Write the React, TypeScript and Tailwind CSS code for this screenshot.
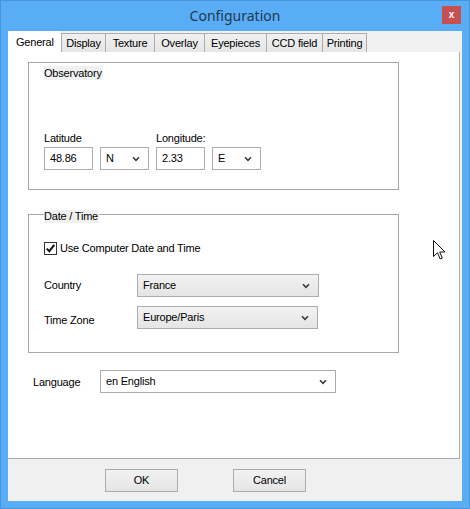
import React from 'react'

function Chevron() {
  return (
    <svg width="8" height="6" viewBox="0 0 8 6" className="shrink-0">
      <path d="M1 1.2 L4 4.4 L7 1.2" fill="none" stroke="#3a3a3a" strokeWidth="1.6" />
    </svg>
  )
}

function Select({
  value,
  className,
  flat,
}: {
  value: string
  className: string
  flat?: boolean
}) {
  return (
    <div
      className={`flex items-center justify-between border pl-[5px] pr-[8px] ${
        flat
          ? 'border-[#acacac] bg-white'
          : 'border-[#acacac] bg-gradient-to-b from-[#f2f2f2] to-[#e5e5e5]'
      } ${className}`}
    >
      <span>{value}</span>
      <Chevron />
    </div>
  )
}

function TextInput({ value }: { value: string }) {
  return (
    <div className="flex h-[23px] w-[49px] items-center border border-[#acacac] bg-white pl-[5px]">
      {value}
    </div>
  )
}

const tabs = [
  { label: 'Display', w: 'w-[45px]' },
  { label: 'Texture', w: 'w-[49px]' },
  { label: 'Overlay', w: 'w-[50px]' },
  { label: 'Eyepieces', w: 'w-[62px]' },
  { label: 'CCD field', w: 'w-[56px]' },
  { label: 'Printing', w: 'w-[44px]' },
]

export default function App() {
  return (
    <div className="relative flex h-[509px] w-[470px] flex-col border border-[#4796dc] bg-[#59adf6] font-['Liberation_Sans',Arial,sans-serif] text-[11px] tracking-[-0.2px] text-black">
      {/* Title bar */}
      <div className="flex h-[30px] items-start">
        <div className="w-[27px]" />
        <div className="flex-1 pt-[5px] text-center font-['Noto_Sans',sans-serif] text-[14px] leading-[20px] tracking-normal text-[#233850]">
          Configuration
        </div>
        <div className="mt-[5px] mr-[8px] flex h-[18px] w-[19px] items-center justify-center bg-[#c6504f] pb-[2px] text-[10px] font-bold text-white">
          x
        </div>
      </div>

      {/* Client area */}
      <div className="mx-[7px] flex h-[470px] flex-col bg-[#f0f0f0]">
        {/* Tabs */}
        <div className="flex h-[21px] items-end">
          <div className="flex h-[21px] w-[53px] items-start bg-white pt-[3px] pl-[8px]">General</div>
          {tabs.map((t) => (
            <div
              key={t.label}
              className={`flex h-[19px] ${t.w} items-center justify-center border border-b-0 border-[#acacac] bg-gradient-to-b from-[#f0f0f0] to-[#e6e6e6] [&+&]:border-l-0`}
            >
              {t.label}
            </div>
          ))}
        </div>

        {/* Panel */}
        <div className="flex h-[407px] w-[452px] flex-col border border-t-0 border-l-0 border-[#acacac] bg-white pt-[10px] pl-[20px]">
          {/* Observatory */}
          <div className="flex h-[128px] w-[371px] flex-col border border-[#a8a8a8] pt-[3px] pl-[15px]">
            <div className="h-[14px] self-start bg-[#f0f0f0] pr-[1px] leading-[14px]">Observatory</div>
            <div className="mt-[51px] flex h-[14px] leading-[14px]">
              <span className="w-[112px]">Latitude</span>
              <span>Longitude:</span>
            </div>
            <div className="mt-[2px] flex gap-[7px]">
              <TextInput value="48.86" />
              <Select value="N" flat className="h-[23px] w-[49px]" />
              <TextInput value="2.33" />
              <Select value="E" flat className="h-[23px] w-[49px]" />
            </div>
          </div>

          {/* Date / Time */}
          <div className="mt-[24px] flex h-[139px] w-[371px] flex-col border border-[#a8a8a8] pl-[15px]">
            <div className="-mt-[5px] h-[13px] self-start bg-[#f0f0f0] pr-[1px] leading-[13px]">Date / Time</div>
            <div className="mt-[18px] flex h-[14px] items-center gap-[3px]">
              <div className="flex h-[13px] w-[13px] items-center justify-center border border-[#333] bg-white">
                <svg width="11" height="11" viewBox="0 0 11 11">
                  <path d="M1.8 5.6 L4.3 8.2 L9.3 1.8" fill="none" stroke="#111" strokeWidth="2" />
                </svg>
              </div>
              <span>Use Computer Date and Time</span>
            </div>
            <div className="mt-[19px] flex items-center">
              <span className="w-[93px]">Country</span>
              <Select value="France" className="h-[23px] w-[182px]" />
            </div>
            <div className="mt-[9px] flex items-center">
              <span className="w-[93px] pt-[6px]">Time Zone</span>
              <Select value="Europe/Paris" className="h-[23px] w-[181px]" />
            </div>
          </div>

          {/* Language */}
          <div className="mt-[17px] ml-[5px] flex items-center">
            <span className="w-[67px] pt-[2px]">Language</span>
            <Select value="en English" flat className="h-[23px] w-[236px]" />
          </div>
        </div>

        {/* Buttons */}
        <div className="flex gap-[55px] pt-[10px] pl-[97px]">
          <div className="flex h-[23px] w-[73px] items-center justify-center border border-[#acacac] bg-gradient-to-b from-[#f2f2f2] to-[#e5e5e5]">
            OK
          </div>
          <div className="flex h-[23px] w-[73px] items-center justify-center border border-[#acacac] bg-gradient-to-b from-[#f2f2f2] to-[#e5e5e5]">
            Cancel
          </div>
        </div>
      </div>

      {/* Mouse cursor */}
      <svg
        className="absolute top-[239px] left-[432px]"
        width="13"
        height="21"
        viewBox="0 0 13 21"
      >
        <path
          d="M0.5 0.5 L0.5 16.5 L4.5 12.8 L7.2 19 L9.3 18.1 L6.7 12 L12 12 Z"
          fill="white"
          stroke="#111"
          strokeWidth="1"
        />
      </svg>
    </div>
  )
}
